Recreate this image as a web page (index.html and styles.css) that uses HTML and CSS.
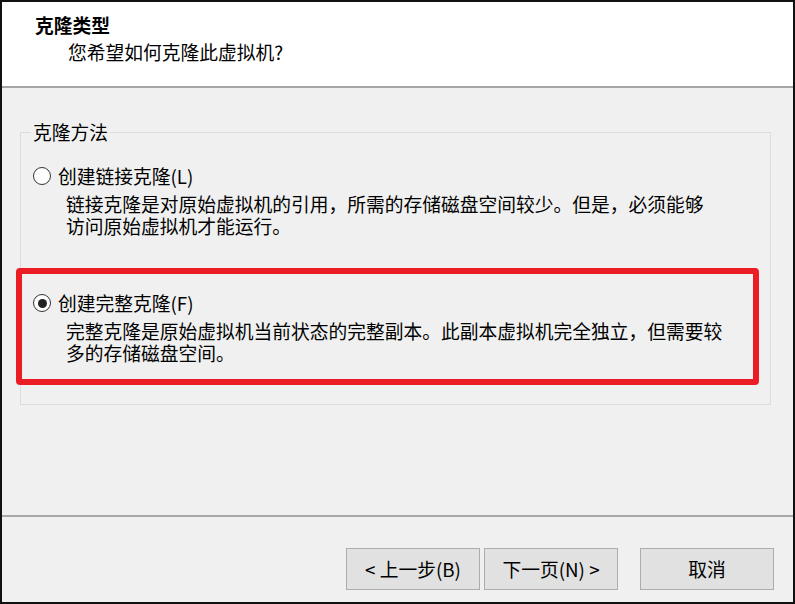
FILE: index.html
```html
<!DOCTYPE html>
<html lang="zh-CN">
<head>
<meta charset="utf-8">
<title>克隆类型</title>
<link rel="stylesheet" href="styles.css">
</head>
<body>
<div class="window">
  <div class="header">
    <div class="title">克隆类型</div>
    <div class="subtitle">您希望如何克隆此虚拟机?</div>
  </div>
  <div class="content">
    <fieldset class="group">
      <legend class="legend">克隆方法</legend>
      <div class="options">
        <div class="option">
          <div class="option-row">
            <span class="radio"></span>
            <span class="label">创建链接克隆(L)</span>
          </div>
          <div class="desc">链接克隆是对原始虚拟机的引用，所需的存储磁盘空间较少。但是，必须能够<br>访问原始虚拟机才能运行。</div>
        </div>
        <div class="option option-second">
          <div class="option-row">
            <span class="radio checked"></span>
            <span class="label">创建完整克隆(F)</span>
          </div>
          <div class="desc">完整克隆是原始虚拟机当前状态的完整副本。此副本虚拟机完全独立，但需要较<br>多的存储磁盘空间。</div>
        </div>
      </div>
    </fieldset>
  </div>
  <div class="footer">
    <div class="buttons">
      <button class="btn">&lt; 上一步(B)</button>
      <button class="btn">下一页(N) &gt;</button>
      <button class="btn btn-cancel">取消</button>
    </div>
  </div>
  <div class="highlight"></div>
</div>
</body>
</html>
```

FILE: styles.css
```css
* {
  box-sizing: border-box;
}

html, body {
  margin: 0;
  padding: 0;
  background: #f0f0f0;
}

body {
  font-family: "Noto Sans CJK SC", "Noto Sans", sans-serif;
  font-size: 18.75px;
  line-height: 22px;
  color: #000;
}

.window {
  position: relative;
  width: 795px;
  height: 604px;
  border: 2px solid #111;
  background: #f0f0f0;
  display: flex;
  flex-direction: column;
}

.header {
  height: 86px;
  flex: none;
  background: #fff;
  border-bottom: 2px solid #a5a5a5;
  padding: 12px 0 0 33px;
}

.title {
  font-weight: bold;
}

.subtitle {
  margin-top: 5px;
  padding-left: 33px;
}

.content {
  flex: 1;
  padding: 33px 22px 0 18px;
}

.group {
  margin: 0;
  border: 1px solid #dcdcdc;
  padding: 22px 0 40px 0;
  min-width: 0;
}

.legend {
  margin-left: 10px;
  padding: 0 2px;
}

.options {
  padding-left: 12px;
}

.option-row {
  display: flex;
  align-items: center;
  gap: 7px;
}

.option-second {
  margin-top: 55px;
}

.radio {
  width: 18px;
  height: 18px;
  border: 1.5px solid #333;
  border-radius: 50%;
  background: #fff;
  display: flex;
  align-items: center;
  justify-content: center;
  flex: none;
}

.radio.checked::after {
  content: "";
  width: 9px;
  height: 9px;
  border-radius: 50%;
  background: #222;
}

.desc {
  margin-top: 6px;
  margin-left: 33px;
  white-space: nowrap;
}

.footer {
  flex: none;
  border-top: 2px solid #a8a8a8;
  padding: 31px 19px 12px 0;
}

.buttons {
  display: flex;
  justify-content: flex-end;
  gap: 4px;
}

.btn {
  width: 134px;
  height: 42px;
  background: #e1e1e1;
  border: 1px solid #adadad;
  font-family: "Noto Sans CJK SC", "Noto Sans", sans-serif;
  font-size: 18.75px;
  line-height: 22px;
  color: #000;
  padding: 0;
}

.btn-cancel {
  margin-left: 18px;
}

.highlight {
  position: absolute;
  left: 14px;
  top: 266px;
  width: 743px;
  height: 117px;
  border: 6px solid #ec1c24;
  border-radius: 4px;
  pointer-events: none;
}
```
